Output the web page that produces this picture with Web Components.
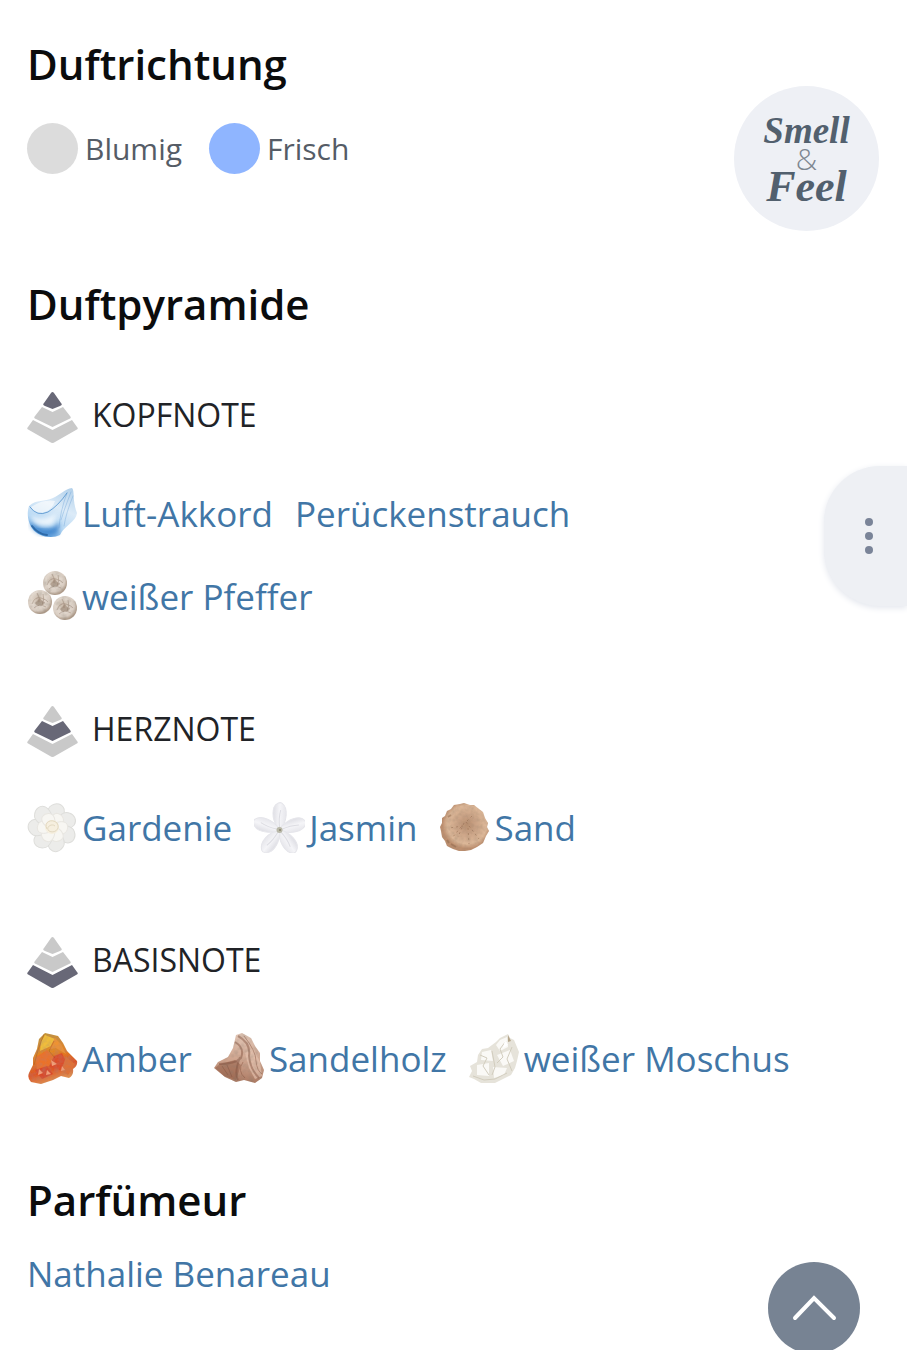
<!DOCTYPE html>
<html lang="de">

<head>
  <meta charset="utf-8">
  <meta name="viewport" content="width=device-width, initial-scale=1">
  <title>Duftpyramide</title>
  <style>
    body {
      margin: 0;
      background: #fff;
      font-family: "Open Sans", "Noto Sans", sans-serif;
    }
  </style>
</head>

<body>
  <scent-page>
    <scent-section heading="Duftrichtung" class="direction">
      <scent-swatch color="#dcdcdc">Blumig</scent-swatch>
      <scent-swatch color="#8fb5ff">Frisch</scent-swatch>
      <smell-feel-badge slot="aside"></smell-feel-badge>
    </scent-section>

    <scent-section heading="Duftpyramide" class="pyramid">
      <note-group level="0" label="KOPFNOTE">
        <note-link icon="air">Luft-Akkord</note-link>
        <note-link>Perückenstrauch</note-link>
        <note-link icon="pepper">weißer Pfeffer</note-link>
      </note-group>
      <note-group level="1" label="HERZNOTE">
        <note-link icon="gardenia">Gardenie</note-link>
        <note-link icon="jasmine">Jasmin</note-link>
        <note-link icon="sand">Sand</note-link>
      </note-group>
      <note-group level="2" label="BASISNOTE">
        <note-link icon="amber">Amber</note-link>
        <note-link icon="sandalwood">Sandelholz</note-link>
        <note-link icon="musk">weißer Moschus</note-link>
      </note-group>
    </scent-section>

    <scent-section heading="Parfümeur" class="perfumer">
      <note-link>Nathalie Benareau</note-link>
    </scent-section>
  </scent-page>

  <side-menu-button></side-menu-button>
  <scroll-top-button></scroll-top-button>

  <script>
    // Ingredient drawings, all on a 51 x 51 canvas
    const petals = (count, path, fill, stroke, turn = 0, center = '25.5 25.5') => {
      let out = '';
      for (let i = 0; i < count; i++) {
        out += `<path d="${path}" fill="${fill}" stroke="${stroke}" transform="rotate(${turn + i * 360 / count} ${center})"/>`;
      }
      return out;
    };

    const peppercorn = (x, y, r) => `
      <circle cx="${x}" cy="${y}" r="${r}" fill="url(#g)"/>
      <g transform="translate(${x} ${y})" fill="none" stroke="#8b7665" stroke-opacity=".4" filter="url(#soft)">
        <path d="M-8 2 Q-5 -6 1 -4 T8 0 M-6 6 Q-1 1 6 5 M-3 -9 Q0 -5 -1 0 M3 -8 Q5 -3 2 3"/>
        <path d="M-5 1 Q-2 -2 0 -4 Q2 0 5 0 Q4 4 0 3 Q-3 5 -5 1Z" fill="#7d6350" fill-opacity=".4" stroke="none"/>
      </g>`;

    const ingredients = {
      air: `
        <defs>
          <linearGradient id="g" x1=".8" y1="0" x2=".35" y2="1">
            <stop offset="0" stop-color="#b5d2eb"/><stop offset=".4" stop-color="#dcebf8"/>
            <stop offset=".75" stop-color="#b9d9f4"/><stop offset="1" stop-color="#5f9fdc"/>
          </linearGradient>
          <filter id="s"><feGaussianBlur stdDeviation="2"/></filter>
        </defs>
        <path d="M2 18 C10 11 17 14 26 10 C33 7 38 1 45 0 C48 3 45 12 50 25 C49 34 37 38 33 47 C25 51 11 49 5 40 C0 33 0 24 2 18Z" fill="url(#g)" filter="url(#soft)"/>
        <path d="M4 33 C12 43 22 44 33 34 L31 45 C22 50 10 47 4 38Z" fill="#2673c4" opacity=".7" filter="url(#s)"/>
        <path d="M4 19 Q17 11 28 13 Q24 25 12 25 Q6 24 4 19Z" fill="#fff" opacity=".6" filter="url(#soft)"/>
        <path d="M4 28 Q17 34 30 25 L26 36 Q14 41 6 34Z" fill="#fff" opacity=".7" filter="url(#s)"/>
        <g fill="none" stroke="#4f90cc" stroke-linecap="round" filter="url(#soft)">
          <path d="M3 19 Q10 29 21 24 Q31 18 40 5" opacity=".8"/>
          <path d="M40 5 Q33 24 32 40 M46 8 Q39 25 37 38 M44 4 Q37 22 34 32" opacity=".3"/>
          <path d="M5 38 Q11 46 20 47" stroke="#245f9d" stroke-width="2" opacity=".8"/>
        </g>`,

      pepper: `
        <defs>
          <radialGradient id="g" cx=".42" cy=".38" r=".6">
            <stop offset="0" stop-color="#cbbbab"/><stop offset=".5" stop-color="#e2d8ce"/>
            <stop offset=".8" stop-color="#d9cdc2"/><stop offset="1" stop-color="#b09d8c"/>
          </radialGradient>
        </defs>
        <g filter="url(#mist)">${peppercorn(28, 12, 12)}${peppercorn(13, 31, 12)}${peppercorn(38, 37, 12)}</g>`,

      gardenia: `
        <g filter="url(#soft)">
          ${petals(7, 'M25.5 27 C18 20 15 8 20 4 C24 0 30 0 33 5 C36 12 31 21 25.5 27Z', '#ececea', '#dededb', 12)}
          ${petals(6, 'M25.5 27 C19 23 18 14 22 11 C27 9 33 12 32 18 C31 22 29 25 25.5 27Z', '#f7f6f2', '#e8e6e1', 30)}
          <circle cx="25" cy="25" r="7" fill="#f6efdf"/>
          <path d="M20 27 C16 20 25 16 30 21 C34 27 27 32 22 29 C18 25 25 21 28 24" fill="none" stroke="#e2d8c0"/>
        </g>`,

      jasmine: `
        <defs>
          <linearGradient id="g" x1="0" x2="1">
            <stop offset="0" stop-color="#dedee4"/><stop offset=".5" stop-color="#f5f5f8"/><stop offset="1" stop-color="#e6e6eb"/>
          </linearGradient>
        </defs>
        <g filter="url(#soft)">
          ${petals(5, 'M25.5 29 C20 23 17 13 19 6 C21 1 25 0 27 1 C34 6 33 19 25.5 29Z', 'url(#g)', '#e6e6eb', 2, '25.5 28')}
          ${petals(5, 'M25.5 26 Q24 16 26 8', 'none', '#dcdce2', 2, '25.5 28')}
        </g>
        <circle cx="25.5" cy="28" r="3" fill="#b9b8a8" filter="url(#soft)"/><circle cx="26" cy="28" r="1" fill="#8a8570"/>`,

      sand: `
        <defs>
          <radialGradient id="g" cx=".55" cy=".45">
            <stop offset="0" stop-color="#b98f70"/><stop offset=".35" stop-color="#caa285"/>
            <stop offset=".8" stop-color="#ddb899"/><stop offset="1" stop-color="#bd8f6f"/>
          </radialGradient>
        </defs>
        <g filter="url(#grain)">
          <path d="M3 16 L6 14 L8 9 L12 7 L15 3 L21 2 L25 1 L31 3 L35 3 L40 7 L44 10 L46 16 L49 21 L48 25 L50 29 L47 34 L44 41 L38 45 L32 48 L26 49 L20 49 L14 47 L8 44 L6 39 L3 35 L2 29 L1 25 L3 21Z" fill="url(#g)"/>
          <g fill="none" stroke="#8f6649" opacity=".5">
            <path d="M25 21 L19 35 M27 20 L40 37 M22 25 L13 36 M29 26 L30 42 M24 24 L10 26 M28 19 L35 12" stroke-dasharray="2 3"/>
            <path d="M8 38 L10 41 M12 42 L17 45 M9 15 L12 13" stroke-width="2"/>
          </g>
        </g>`,

      amber: `
        <defs>
          <linearGradient id="g" x1=".3" y1="0" x2=".6" y2="1">
            <stop offset="0" stop-color="#c59739"/><stop offset=".4" stop-color="#e28524"/>
            <stop offset=".7" stop-color="#dd5425"/><stop offset="1" stop-color="#e4a25c"/>
          </linearGradient>
        </defs>
        <g filter="url(#grain)">
          <path d="M18 0 L31 3 L36 10 L40 18 L50 28 Q51 33 46 36 Q47 42 42 45 L34 43 L26 47 L14 51 L4 49 Q0 45 2 40 L6 32 L6 25 L10 16 L12 6Z" fill="url(#g)"/>
          <g filter="url(#soft)">
            <path d="M18 2 L28 6 L24 13 L13 18 L14 9Z" fill="#f0bd3b"/>
            <path d="M28 5 L34 11 L39 21 L29 15 L22 16Z" fill="#ee9330"/>
            <path d="M9 24 L20 17 L27 25 L22 33 L10 37Z" fill="#ea7229"/>
            <path d="M27 23 L35 20 L40 31 L33 37 L22 34Z" fill="#dc4d2b"/>
            <path d="M8 37 L20 33 L26 41 L15 46Z" fill="#d9492c"/>
            <path d="M39 24 L48 31 L41 42 L34 38Z" fill="#df7137"/>
            <path d="M12 36 L16 40 L11 42Z M24 27 L30 31 L25 33Z M20 37 L24 41 L19 42Z M35 33 L38 37 L34 38Z" fill="#f5a07a"/>
          </g>
          <path d="M17 1 L11 17 L7 32 M27 8 L22 18 L28 25" fill="none" stroke="#9b4a1b" opacity=".4"/>
        </g>`,

      sandalwood: `
        <defs>
          <linearGradient id="g" x1=".5" y1="0" x2=".4" y2="1">
            <stop offset="0" stop-color="#e0c5b5"/><stop offset=".55" stop-color="#cfa48e"/><stop offset="1" stop-color="#a8765f"/>
          </linearGradient>
        </defs>
        <g filter="url(#mist)">
          <path d="M22 2 L28 0 L37 5 L41 13 L46 20 L46 28 L50 37 L48 45 L41 50 L30 47 L22 49 L11 44 L0 35 L4 29 L14 24 L19 15Z" fill="url(#g)"/>
          <path d="M1 35 L6 31 L21 27 L27 32 L22 47 L10 43Z" fill="#935b44" opacity=".5" filter="url(#soft)"/>
          <path d="M31 20 L39 15 L46 29 L48 43 L41 46 L35 35Z" fill="#e8c7b4" opacity=".6" filter="url(#soft)"/>
          <g fill="none" stroke="#804f3c" opacity=".45" filter="url(#soft)">
            <path d="M24 3 Q37 10 35 23 Q36 36 45 45 M21 9 Q31 15 27 25 Q21 31 5 31 M26 24 Q20 40 24 47" stroke-width="2"/>
            <path d="M30 3 Q42 18 42 28 Q43 38 48 41 M29 29 Q23 38 31 45 M8 33 L14 42 M13 32 L18 44"/>
          </g>
        </g>`,

      musk: `
        <g filter="url(#soft)">
          <path d="M39 1 L41 5 L45 7 L50 19 L48 28 L46 35 L42 42 L34 46 L26 50 L12 50 L5 46 L0 44 L3 38 L1 33 L8 29 L9 22 L13 16 L19 15 L27 9 L31 5Z" fill="#e6e3da"/>
          <path d="M31 7 L38 4 L39 14 L31 18 L27 12Z M13 19 L22 17 L24 28 L12 27Z M28 22 L41 17 L45 28 L34 33Z M8 32 L20 30 L20 43 L8 42Z M24 34 L38 35 L35 42 L25 45Z" fill="#faf9f6"/>
          <path d="M37 8 L31 16 L34 24 L28 30 M11 22 L18 25 L14 33 L20 42 M43 14 L38 26 L43 38 M4 43 L15 47 L26 46 L38 40 M23 18 L26 34 L23 42" fill="none" stroke="#d2cdbe"/>
        </g>
        <path d="M39 2 L42 8 L39 9Z" fill="#b4a58b"/><path d="M36 7 L39 12 L34 15Z" fill="#fff"/>`
    };

    class ScentPage extends HTMLElement {
      constructor() {
        super();
        this.attachShadow({ mode: 'open' }).innerHTML = `
          <style>
            :host {
              display: block;
              padding: 36px 28px 32px 27px;
            }
            ::slotted(.pyramid) {
              margin-top: 45px;
              --content-gap: 60px;
            }
            ::slotted(.perfumer) {
              margin-top: 88px;
              --content-gap: 20px;
            }
          </style>
          <main><slot></slot></main>`;
      }
    }

    class ScentSection extends HTMLElement {
      connectedCallback() {
        this.attachShadow({ mode: 'open' }).innerHTML = `
          <style>
            :host {
              display: block;
            }
            section {
              display: flex;
              justify-content: space-between;
            }
            .main {
              flex: 1;
            }
            h2 {
              margin: 0;
              color: #0b0c0d;
              font-size: 42px;
              font-weight: 600;
              line-height: 56px;
            }
            .content {
              display: flex;
              flex-wrap: wrap;
              gap: 84px 27px;
              margin-top: var(--content-gap, 31px);
            }
            ::slotted(note-group) {
              width: 100%;
            }
            ::slotted([slot="aside"]) {
              margin-top: 50px;
            }
          </style>
          <section>
            <div class="main">
              <h2>${this.getAttribute('heading')}</h2>
              <div class="content"><slot></slot></div>
            </div>
            <slot name="aside"></slot>
          </section>`;
      }
    }

    class ScentSwatch extends HTMLElement {
      connectedCallback() {
        this.attachShadow({ mode: 'open' }).innerHTML = `
          <style>
            :host {
              display: flex;
              align-items: center;
              gap: 7px;
              color: #555c66;
              font-size: 30px;
              line-height: 51px;
            }
            i {
              width: 51px;
              height: 51px;
              border-radius: 50%;
              background: ${this.getAttribute('color')};
            }
          </style>
          <i></i><span><slot></slot></span>`;
      }
    }

    class SmellFeelBadge extends HTMLElement {
      constructor() {
        super();
        this.attachShadow({ mode: 'open' }).innerHTML = `
          <style>
            :host {
              display: block;
            }
            button {
              display: flex;
              flex-direction: column;
              align-items: center;
              justify-content: center;
              width: 145px;
              height: 145px;
              padding: 0;
              border: 0;
              border-radius: 50%;
              background: #eef0f5;
              color: #52606e;
              font: italic 700 37px/30px "Liberation Serif", serif;
            }
            .and {
              color: #7e8791;
              font: 300 30px/26px "Open Sans", sans-serif;
            }
            .feel {
              font-size: 44px;
            }
          </style>
          <button type="button">
            <span>Smell</span>
            <span class="and">&amp;</span>
            <span class="feel">Feel</span>
          </button>`;
      }
    }

    // Three layers, the one for the current level is dark
    class PyramidIcon extends HTMLElement {
      connectedCallback() {
        const level = Number(this.getAttribute('level'));
        const layers = [
          'M24 1 Q25.5 -1 27 1 L34 11 Q36 13 33 14 L25.5 17 L18 14 Q15 13 17 11Z',
          'M15 15 L25.5 20 L36 15 L43 24 Q45 26 42 27 L25.5 35 L9 27 Q6 26 8 24Z',
          'M6 28 L25.5 38 L45 28 L50 35 Q52 37 49 38 L28 50 Q25.5 52 23 50 L2 38 Q-1 37 1 35Z'
        ];
        this.attachShadow({ mode: 'open' }).innerHTML = `
          <style>
            :host, svg {
              display: block;
              width: 51px;
              height: 51px;
            }
          </style>
          <svg viewBox="0 0 51 51" aria-hidden="true">
            ${layers.map((d, i) => `<path d="${d}" fill="${i === level ? '#686877' : '#c9c9c9'}"/>`).join('')}
          </svg>`;
      }
    }

    class NoteGroup extends HTMLElement {
      connectedCallback() {
        this.attachShadow({ mode: 'open' }).innerHTML = `
          <style>
            :host {
              display: block;
            }
            header {
              display: flex;
              align-items: center;
              gap: 14px;
            }
            h3 {
              margin: 0;
              padding-bottom: 5px;
              color: #212327;
              font-size: 32px;
              font-weight: 400;
              line-height: 44px;
            }
            .links {
              display: flex;
              flex-wrap: wrap;
              gap: 32px 22px;
              margin-top: 45px;
              padding-right: 48px;
            }
          </style>
          <header>
            <pyramid-icon level="${this.getAttribute('level')}"></pyramid-icon>
            <h3>${this.getAttribute('label')}</h3>
          </header>
          <div class="links"><slot></slot></div>`;
      }
    }

    class NoteLink extends HTMLElement {
      connectedCallback() {
        const icon = this.getAttribute('icon');
        this.attachShadow({ mode: 'open' }).innerHTML = `
          <style>
            :host {
              display: block;
            }
            a {
              display: flex;
              align-items: center;
              gap: 4px;
              color: #4176a6;
              font-size: 35px;
              line-height: 51px;
              text-decoration: none;
              white-space: nowrap;
            }
            svg {
              width: 51px;
              height: 51px;
            }
          </style>
          <a href="#">
            ${icon ? `<svg viewBox="0 0 51 51" aria-hidden="true">
              <defs>
                <filter id="soft"><feGaussianBlur stdDeviation=".6"/></filter>
                <filter id="grain" x="0" y="0" width="1" height="1">
                  <feTurbulence type="fractalNoise" baseFrequency=".25" numOctaves="3" result="noise"/>
                  <feColorMatrix in="noise" values="0 0 0 0 .3  0 0 0 0 .22  0 0 0 0 .15  .6 0 0 0 -.2" result="specks"/>
                  <feComposite in="specks" in2="SourceGraphic" operator="in" result="inside"/>
                  <feMerge><feMergeNode in="SourceGraphic"/><feMergeNode in="inside"/></feMerge>
                </filter>
                <filter id="mist" x="0" y="0" width="1" height="1" color-interpolation-filters="sRGB">
                  <feTurbulence type="fractalNoise" baseFrequency=".2" numOctaves="2" result="noise"/>
                  <feColorMatrix in="noise" values="0 0 0 0 .5  0 0 0 0 .47  0 0 0 0 .42  .6 0 0 0 -.25" result="specks"/>
                  <feComposite in="specks" in2="SourceGraphic" operator="in" result="inside"/>
                  <feMerge><feMergeNode in="SourceGraphic"/><feMergeNode in="inside"/></feMerge>
                </filter>
              </defs>
              ${ingredients[icon]}
            </svg>` : ''}
            <span><slot></slot></span>
          </a>`;
      }
    }

    class SideMenuButton extends HTMLElement {
      constructor() {
        super();
        this.attachShadow({ mode: 'open' }).innerHTML = `
          <style>
            :host {
              position: fixed;
              top: 466px;
              right: 0;
            }
            button {
              display: flex;
              flex-direction: column;
              align-items: center;
              justify-content: center;
              gap: 6px;
              width: 83px;
              height: 140px;
              padding: 0 0 0 7px;
              border: 0;
              border-radius: 56px 0 0 56px;
              background: #eef0f4;
              box-shadow: 0 2px 6px #e3e6ed;
            }
            i {
              width: 8px;
              height: 8px;
              border-radius: 50%;
              background: #7a8498;
            }
          </style>
          <button type="button" aria-label="Menü"><i></i><i></i><i></i></button>`;
      }
    }

    class ScrollTopButton extends HTMLElement {
      constructor() {
        super();
        this.attachShadow({ mode: 'open' }).innerHTML = `
          <style>
            :host {
              position: fixed;
              right: 47px;
              bottom: -4px;
            }
            button {
              display: block;
              width: 92px;
              height: 92px;
              padding: 0;
              border: 0;
              border-radius: 50%;
              background: #778393;
            }
            svg {
              display: block;
              width: 92px;
              height: 92px;
            }
          </style>
          <button type="button" aria-label="Nach oben">
            <svg viewBox="0 0 92 92" fill="none" stroke="#fff" stroke-width="4" stroke-linecap="round">
              <path d="M27 56 L46 36 L66 56"/>
            </svg>
          </button>`;
        this.shadowRoot.querySelector('button').addEventListener('click', () => {
          window.scrollTo({ top: 0, behavior: 'smooth' });
        });
      }
    }

    customElements.define('scent-page', ScentPage);
    customElements.define('scent-section', ScentSection);
    customElements.define('scent-swatch', ScentSwatch);
    customElements.define('smell-feel-badge', SmellFeelBadge);
    customElements.define('pyramid-icon', PyramidIcon);
    customElements.define('note-group', NoteGroup);
    customElements.define('note-link', NoteLink);
    customElements.define('side-menu-button', SideMenuButton);
    customElements.define('scroll-top-button', ScrollTopButton);
  </script>
</body>

</html>
